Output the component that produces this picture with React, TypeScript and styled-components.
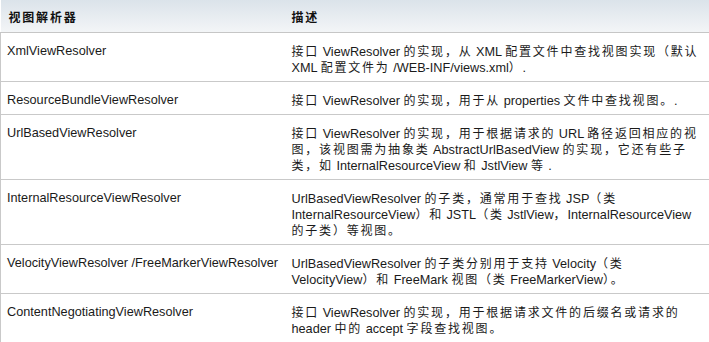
import React from "react";
import styled, { createGlobalStyle } from "styled-components";

interface Resolver {
  name: string;
  lines: string[];
}

const rows: Resolver[] = [
  {
    name: "XmlViewResolver",
    lines: [
      "接口 ViewResolver 的实现，从 XML 配置文件中查找视图实现（默认",
      "XML 配置文件为 /WEB-INF/views.xml）.",
    ],
  },
  {
    name: "ResourceBundleViewResolver",
    lines: ["接口 ViewResolver 的实现，用于从 properties 文件中查找视图。."],
  },
  {
    name: "UrlBasedViewResolver",
    lines: [
      "接口 ViewResolver 的实现，用于根据请求的 URL 路径返回相应的视",
      "图，该视图需为抽象类 AbstractUrlBasedView 的实现，它还有些子",
      "类，如 InternalResourceView 和 JstlView 等 .",
    ],
  },
  {
    name: "InternalResourceViewResolver",
    lines: [
      "UrlBasedViewResolver 的子类，通常用于查找 JSP（类",
      "InternalResourceView）和 JSTL（类 JstlView，InternalResourceView",
      "的子类）等视图。",
    ],
  },
  {
    name: "VelocityViewResolver /FreeMarkerViewResolver",
    lines: [
      "UrlBasedViewResolver 的子类分别用于支持 Velocity（类",
      "VelocityView）和 FreeMark 视图（类 FreeMarkerView）。",
    ],
  },
  {
    name: "ContentNegotiatingViewResolver",
    lines: [
      "接口 ViewResolver 的实现，用于根据请求文件的后缀名或请求的",
      "header 中的 accept 字段查找视图。",
    ],
  },
];

// 汉字比拉丁字母宽一点，单独包起来
const hanRun = /([\u3000-\u303f\u4e00-\u9fff\uff00-\uffef]+)/;

function Mixed(props: { text: string }) {
  return (
    <>
      {props.text.split(hanRun).map((part, i) =>
        hanRun.test(part) ? <Han key={i}>{part}</Han> : part
      )}
    </>
  );
}

export default function App() {
  return (
    <>
      <GlobalStyle />
      <Table>
        <colgroup>
          <col style={{ width: 284 }} />
          <col />
        </colgroup>
        <thead>
          <tr>
            <HeadCell>
              <Line>
                <Mixed text="视图解析器" />
              </Line>
            </HeadCell>
            <HeadCell>
              <Line>
                <Mixed text="描述" />
              </Line>
            </HeadCell>
          </tr>
        </thead>
        <tbody>
          {rows.map((row) => (
            <Row key={row.name}>
              <NameCell>
                <Line>{row.name}</Line>
              </NameCell>
              <DescCell>
                {row.lines.map((line, i) => (
                  <Line key={i}>
                    <Mixed text={line} />
                  </Line>
                ))}
              </DescCell>
            </Row>
          ))}
        </tbody>
      </Table>
    </>
  );
}

const GlobalStyle = createGlobalStyle`
  html, body {
    margin: 0;
    padding: 0;
    background: #ffffff;
    overflow: hidden;
  }
  body {
    font-family: "Liberation Sans", Arial, "Noto Sans CJK SC", sans-serif;
    font-size: 12.7px;
    line-height: 16px;
    color: #1a1a1a;
  }
`;

const Table = styled.table`
  width: 709px;
  table-layout: fixed;
  border-collapse: collapse;
  border-spacing: 0;
`;

const HeadCell = styled.th`
  height: 32px;
  box-sizing: border-box;
  padding: 9px 7px 6px 8px;
  text-align: left;
  vertical-align: top;
  font-weight: bold;
  color: #111111;
  background: linear-gradient(#dbe3ea, #f3f5f7);
  border-bottom: 1px solid #c6c6c6;

  & + & {
    padding-left: 7px;
  }
`;

const Row = styled.tr`
  border-bottom: 1px solid #c9c9c9;
`;

const NameCell = styled.td`
  vertical-align: top;
  padding: 10px 6px 6px 6px;
  border-left: 1px solid #c9c9c9;
`;

const DescCell = styled.td`
  vertical-align: top;
  padding: 10px 4px 6px 7px;
`;

const Line = styled.div`
  height: 16px;
  white-space: nowrap;
`;

const Han = styled.span`
  font-family: "Noto Sans CJK SC", sans-serif;
  font-size: 12px;
  letter-spacing: 1.8px;
`;
